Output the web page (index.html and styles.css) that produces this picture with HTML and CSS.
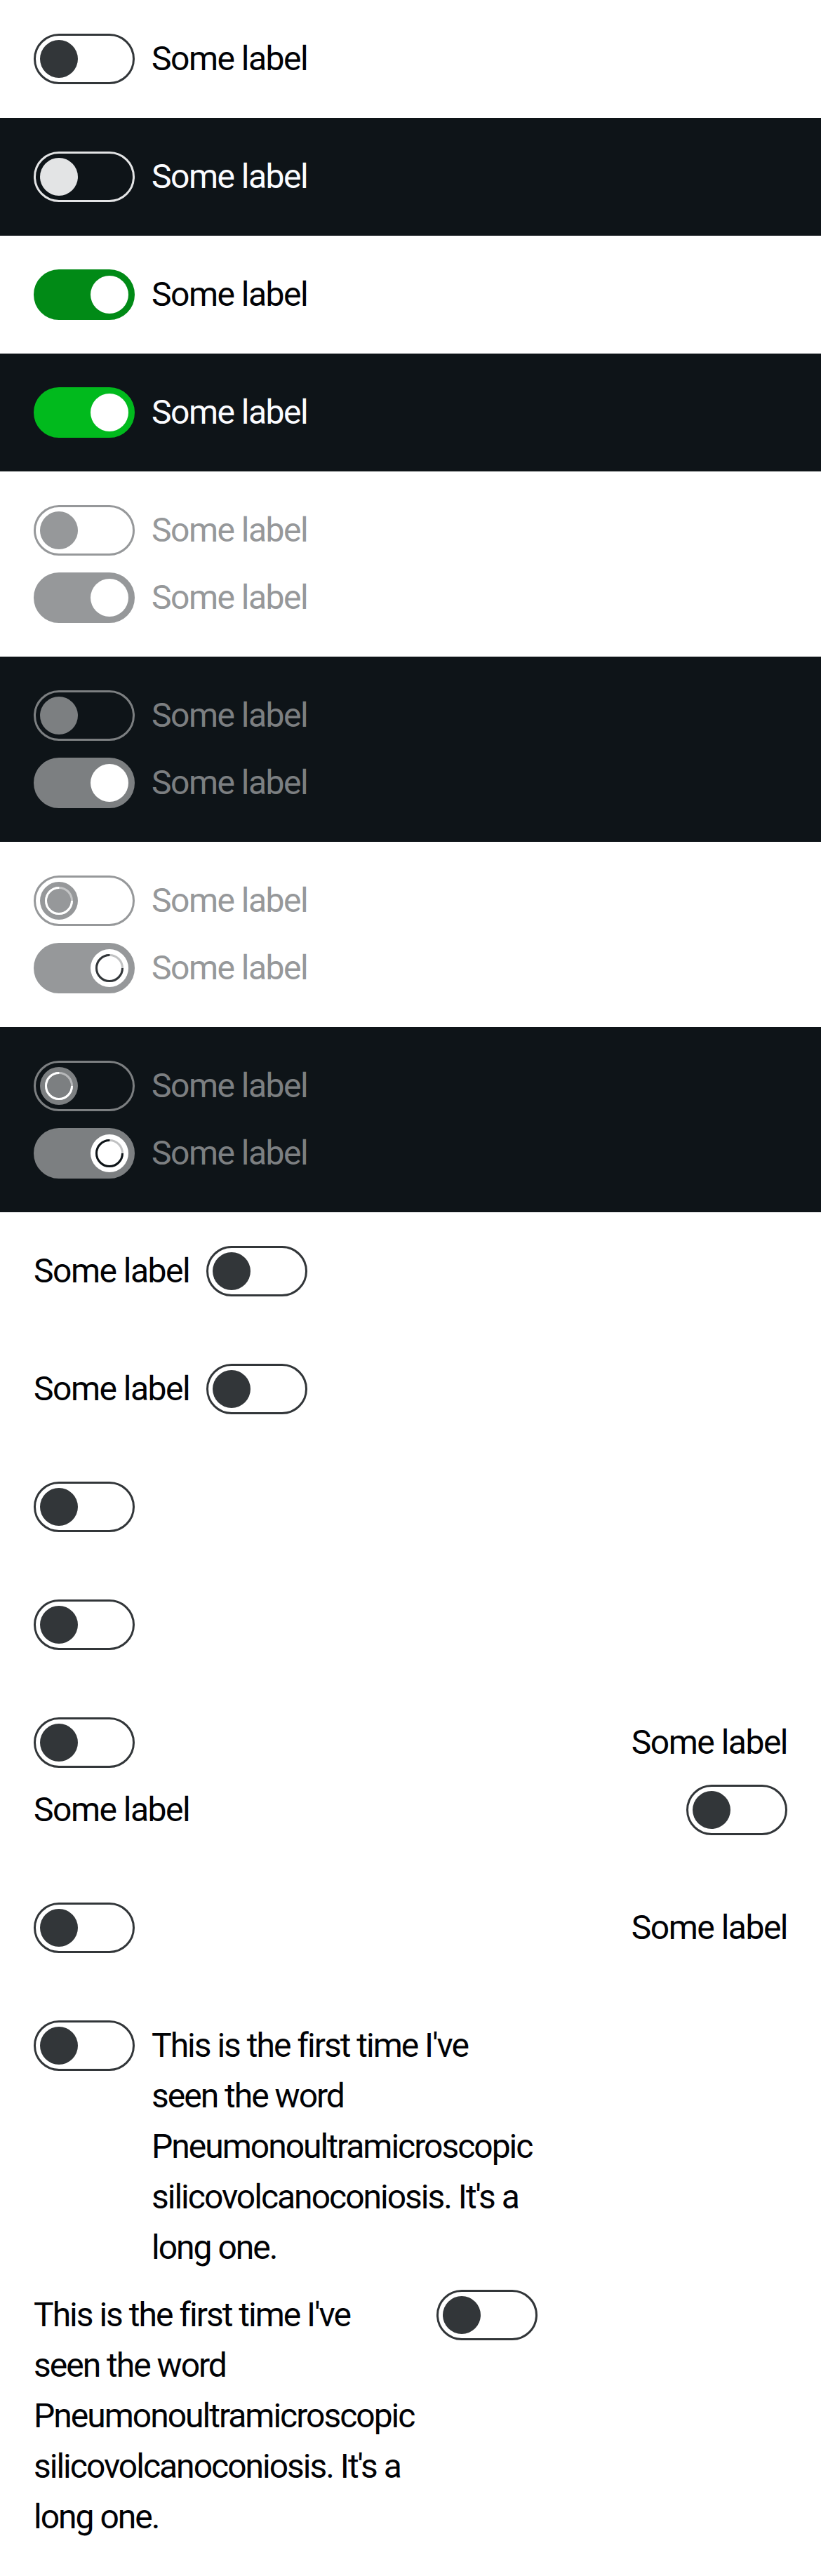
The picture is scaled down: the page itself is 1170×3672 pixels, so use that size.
FILE: index.html
```html
<!DOCTYPE html>
<html lang="en">
<head>
<meta charset="utf-8">
<title>Switch</title>
<link rel="stylesheet" href="styles.css">
</head>
<body>
<div class="sec light">
  <label class="sw"><span class="tg"><span class="th"></span></span><span class="lb">Some label</span></label>
</div>
<div class="sec dark">
  <label class="sw"><span class="tg"><span class="th"></span></span><span class="lb">Some label</span></label>
</div>
<div class="sec light">
  <label class="sw on"><span class="tg"><span class="th"></span></span><span class="lb">Some label</span></label>
</div>
<div class="sec dark">
  <label class="sw on"><span class="tg"><span class="th"></span></span><span class="lb">Some label</span></label>
</div>
<div class="sec light">
  <label class="sw dis"><span class="tg"><span class="th"></span></span><span class="lb">Some label</span></label>
  <label class="sw dis on"><span class="tg"><span class="th"></span></span><span class="lb">Some label</span></label>
</div>
<div class="sec dark">
  <label class="sw dis"><span class="tg"><span class="th"></span></span><span class="lb">Some label</span></label>
  <label class="sw dis on"><span class="tg"><span class="th"></span></span><span class="lb">Some label</span></label>
</div>
<div class="sec light">
  <label class="sw dis load"><span class="tg"><span class="th"><svg class="spin" viewBox="0 0 40 40"><circle class="trk" cx="20" cy="20" r="18.5"/><circle class="arc" cx="20" cy="20" r="18.5"/></svg></span></span><span class="lb">Some label</span></label>
  <label class="sw dis load on"><span class="tg"><span class="th"><svg class="spin" viewBox="0 0 40 40"><circle class="trk" cx="20" cy="20" r="18.5"/><circle class="arc" cx="20" cy="20" r="18.5"/></svg></span></span><span class="lb">Some label</span></label>
</div>
<div class="sec dark">
  <label class="sw dis load"><span class="tg"><span class="th"><svg class="spin" viewBox="0 0 40 40"><circle class="trk" cx="20" cy="20" r="18.5"/><circle class="arc" cx="20" cy="20" r="18.5"/></svg></span></span><span class="lb">Some label</span></label>
  <label class="sw dis load on"><span class="tg"><span class="th"><svg class="spin" viewBox="0 0 40 40"><circle class="trk" cx="20" cy="20" r="18.5"/><circle class="arc" cx="20" cy="20" r="18.5"/></svg></span></span><span class="lb">Some label</span></label>
</div>
<div class="sec light">
  <label class="sw"><span class="lb">Some label</span><span class="tg"><span class="th"></span></span></label>
</div>
<div class="sec light">
  <label class="sw"><span class="lb">Some label</span><span class="tg"><span class="th"></span></span></label>
</div>
<div class="sec light">
  <label class="sw" aria-label="Some label"><span class="tg"><span class="th"></span></span></label>
</div>
<div class="sec light">
  <label class="sw" aria-label="Some label"><span class="tg"><span class="th"></span></span></label>
</div>
<div class="sec light">
  <label class="sw full"><span class="tg"><span class="th"></span></span><span class="lb">Some label</span></label>
  <label class="sw full"><span class="lb">Some label</span><span class="tg"><span class="th"></span></span></label>
</div>
<div class="sec light">
  <label class="sw full"><span class="tg"><span class="th"></span></span><span class="lb">Some label</span></label>
</div>
<div class="sec light">
  <label class="sw long"><span class="tg"><span class="th"></span></span><span class="lb">This is the first time I've seen the word Pneumonoultramicroscopic silicovolcanoconiosis. It's a long one.</span></label>
  <label class="sw long"><span class="lb">This is the first time I've seen the word Pneumonoultramicroscopic silicovolcanoconiosis. It's a long one.</span><span class="tg"><span class="th"></span></span></label>
</div>
</body>
</html>
```
FILE: styles.css
```css
* { box-sizing: border-box; }
body {
  margin: 0;
  background: #ffffff;
  color: #010205;
  font-family: Roboto, "Liberation Sans", sans-serif;
  font-size: 48px;
  line-height: 72px;
}
.sec {
  padding: 48px;
  display: flex;
  flex-direction: column;
  align-items: flex-start;
  gap: 24px;
}
.light { background: #ffffff; color: #010205; }
.dark { background: #0e1418; color: #fbfcff; }

.sw {
  display: flex;
  align-items: flex-start;
  gap: 24px;
}
.sw.full { align-self: stretch; justify-content: space-between; }
.sw.long { width: 718px; }
.sw.long .lb { flex: 1; min-width: 0; letter-spacing: -2px; }

.lb { letter-spacing: -1.5px; white-space: normal; }

.tg {
  flex: none;
  width: 144px;
  height: 72px;
  border: 3px solid #323639;
  border-radius: 36px;
  display: flex;
  align-items: center;
  justify-content: flex-start;
  padding: 0 6px;
}
.th {
  width: 54px;
  height: 54px;
  border-radius: 50%;
  background: #323639;
  display: flex;
  align-items: center;
  justify-content: center;
}
.on .tg { justify-content: flex-end; background: #018a16; border-color: #018a16; }
.on .th { background: #ffffff; }

.dark .tg { border-color: #e3e4e5; }
.dark .th { background: #e3e4e5; }
.dark .on .tg { background: #01ba1d; border-color: #01ba1d; }
.dark .on .th { background: #ffffff; }

.light .dis .tg { border-color: #96989a; background: transparent; }
.light .dis .th { background: #96989a; }
.light .dis.on .tg { background: #96989a; }
.light .dis.on .th { background: #ffffff; }
.light .dis .lb { color: #96989a; }

.dark .dis .tg { border-color: #7c7f81; background: transparent; }
.dark .dis .th { background: #7c7f81; }
.dark .dis.on .tg { background: #7c7f81; }
.dark .dis.on .th { background: #ffffff; }
.dark .dis .lb { color: #7c7f81; }

.spin { width: 40px; height: 40px; display: block; }
.spin circle { fill: none; stroke-width: 3; }
.spin .trk { stroke: rgba(255, 255, 255, 0.45); }
.spin .arc { stroke: #ffffff; stroke-dasharray: 87 120; }
.on .spin .trk { stroke: rgba(50, 54, 57, 0.3); }
.on .spin .arc { stroke: #323639; }
.dark .on .spin .arc { stroke: #0e1418; }
```
